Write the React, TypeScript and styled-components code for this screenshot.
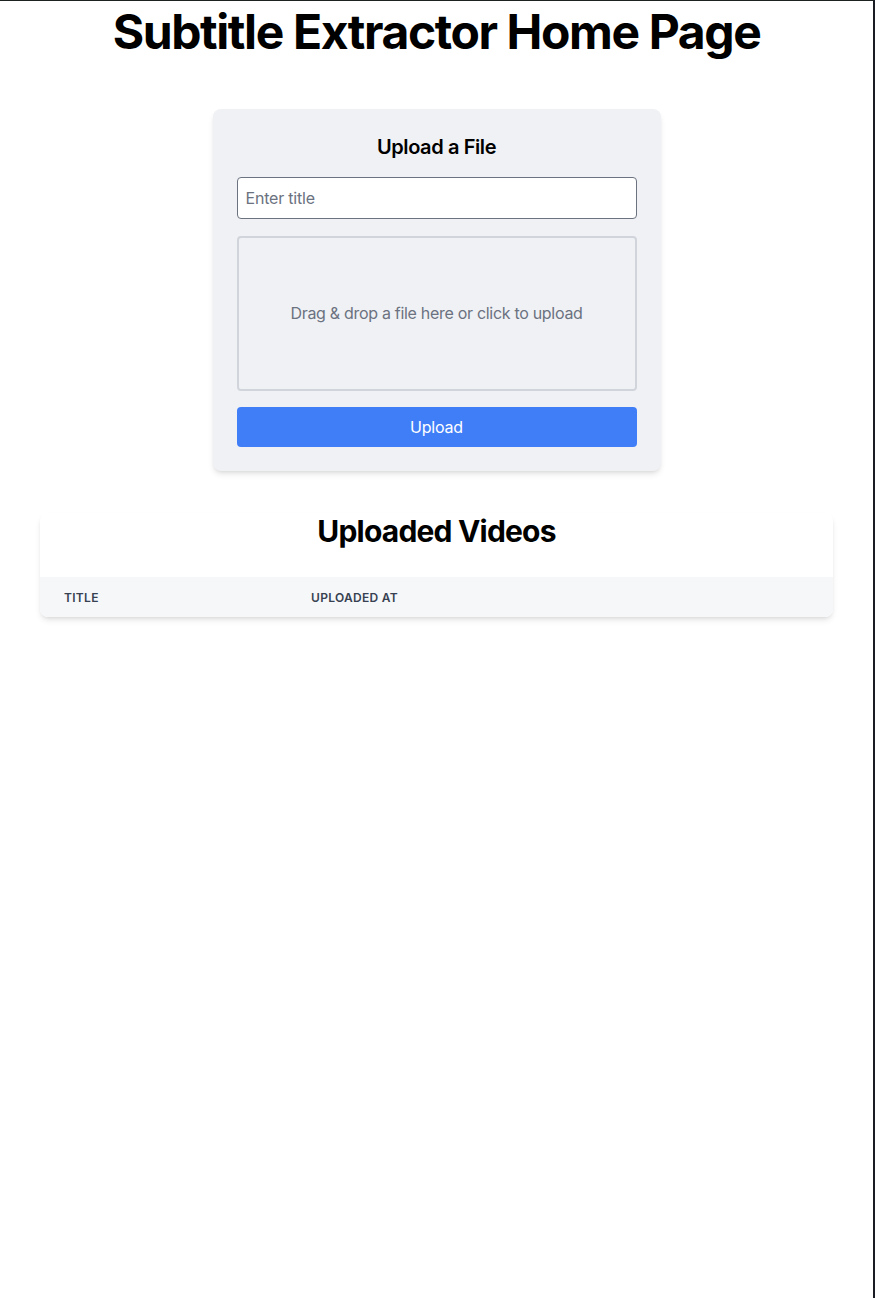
import React from 'react';
import styled, { createGlobalStyle } from 'styled-components';

const GlobalStyle = createGlobalStyle`
  * {
    box-sizing: border-box;
  }

  html, body {
    margin: 0;
    padding: 0;
    background: #ffffff;
  }

  body {
    font-family: Inter, "Noto Sans", "Liberation Sans", sans-serif;
    color: #000000;
  }
`;

const Frame = styled.div`
  min-height: 1298px;
  border-top: 1px solid #1c2222;
  border-right: 2px solid #1a1c24;
  background: #ffffff;
`;

const Page = styled.main`
  display: flex;
  flex-direction: column;
  align-items: center;
  padding: 7px 40px 40px;
`;

const PageTitle = styled.h1`
  margin: 0;
  font-size: 48px;
  line-height: 48px;
  font-weight: 700;
  letter-spacing: -1.4px;
  text-align: center;
`;

const UploadCard = styled.section`
  width: 448px;
  margin-top: 53px;
  padding: 24px;
  background: #f0f1f5;
  border-radius: 8px;
  box-shadow: 0 4px 6px -1px rgba(0, 0, 0, 0.1), 0 2px 4px -2px rgba(0, 0, 0, 0.1);
  display: flex;
  flex-direction: column;
`;

const CardTitle = styled.h2`
  margin: 0 0 16px;
  font-size: 20px;
  line-height: 28px;
  font-weight: 600;
  letter-spacing: -0.4px;
  text-align: center;
`;

const TitleInput = styled.input`
  width: 100%;
  height: 42px;
  margin: 0 0 17px;
  padding: 0 8px;
  font-family: inherit;
  font-size: 16px;
  letter-spacing: -0.2px;
  color: #111827;
  background: #ffffff;
  border: 1px solid #6b7280;
  border-radius: 4px;
  outline: none;

  &::placeholder {
    color: #6b7280;
  }
`;

const DropZone = styled.div`
  height: 155px;
  display: flex;
  align-items: center;
  justify-content: center;
  padding-bottom: 2px;
  border: 2px solid #d1d5db;
  border-radius: 4px;
  font-size: 16px;
  letter-spacing: -0.3px;
  color: #6b7280;
  cursor: pointer;
`;

const UploadButton = styled.button`
  height: 40px;
  margin-top: 16px;
  border: none;
  border-radius: 4px;
  background: #3f7ef7;
  color: #ffffff;
  font-family: inherit;
  font-size: 16px;
  letter-spacing: -0.2px;
  cursor: pointer;
`;

const VideosPanel = styled.section`
  align-self: stretch;
  margin-top: 42px;
  background: #ffffff;
  border-radius: 8px;
  overflow: hidden;
  box-shadow: 0 4px 6px -1px rgba(0, 0, 0, 0.1), 0 2px 4px -2px rgba(0, 0, 0, 0.1);
`;

const PanelTitle = styled.h2`
  margin: 0 0 28px;
  font-size: 30px;
  line-height: 36px;
  font-weight: 700;
  letter-spacing: -0.8px;
  text-align: center;
`;

const Table = styled.table`
  width: 100%;
  border-collapse: collapse;
  table-layout: fixed;
`;

const HeadCell = styled.th<{ $width?: number }>`
  width: ${({ $width }) => ($width ? `${$width}px` : 'auto')};
  height: 40px;
  padding: 0 24px;
  background: #f6f7f9;
  text-align: left;
  font-size: 12px;
  font-weight: 600;
  letter-spacing: 0.3px;
  text-transform: uppercase;
  color: #374151;
`;

export default function App() {
  return (
    <>
      <GlobalStyle />
      <Frame>
        <Page>
          <PageTitle>Subtitle Extractor Home Page</PageTitle>

          <UploadCard>
            <CardTitle>Upload a File</CardTitle>
            <TitleInput type="text" placeholder="Enter title" />
            <DropZone>Drag &amp; drop a file here or click to upload</DropZone>
            <UploadButton type="button">Upload</UploadButton>
          </UploadCard>

          <VideosPanel>
            <PanelTitle>Uploaded Videos</PanelTitle>
            <Table>
              <thead>
                <tr>
                  <HeadCell $width={247}>Title</HeadCell>
                  <HeadCell>Uploaded At</HeadCell>
                </tr>
              </thead>
              <tbody />
            </Table>
          </VideosPanel>
        </Page>
      </Frame>
    </>
  );
}
